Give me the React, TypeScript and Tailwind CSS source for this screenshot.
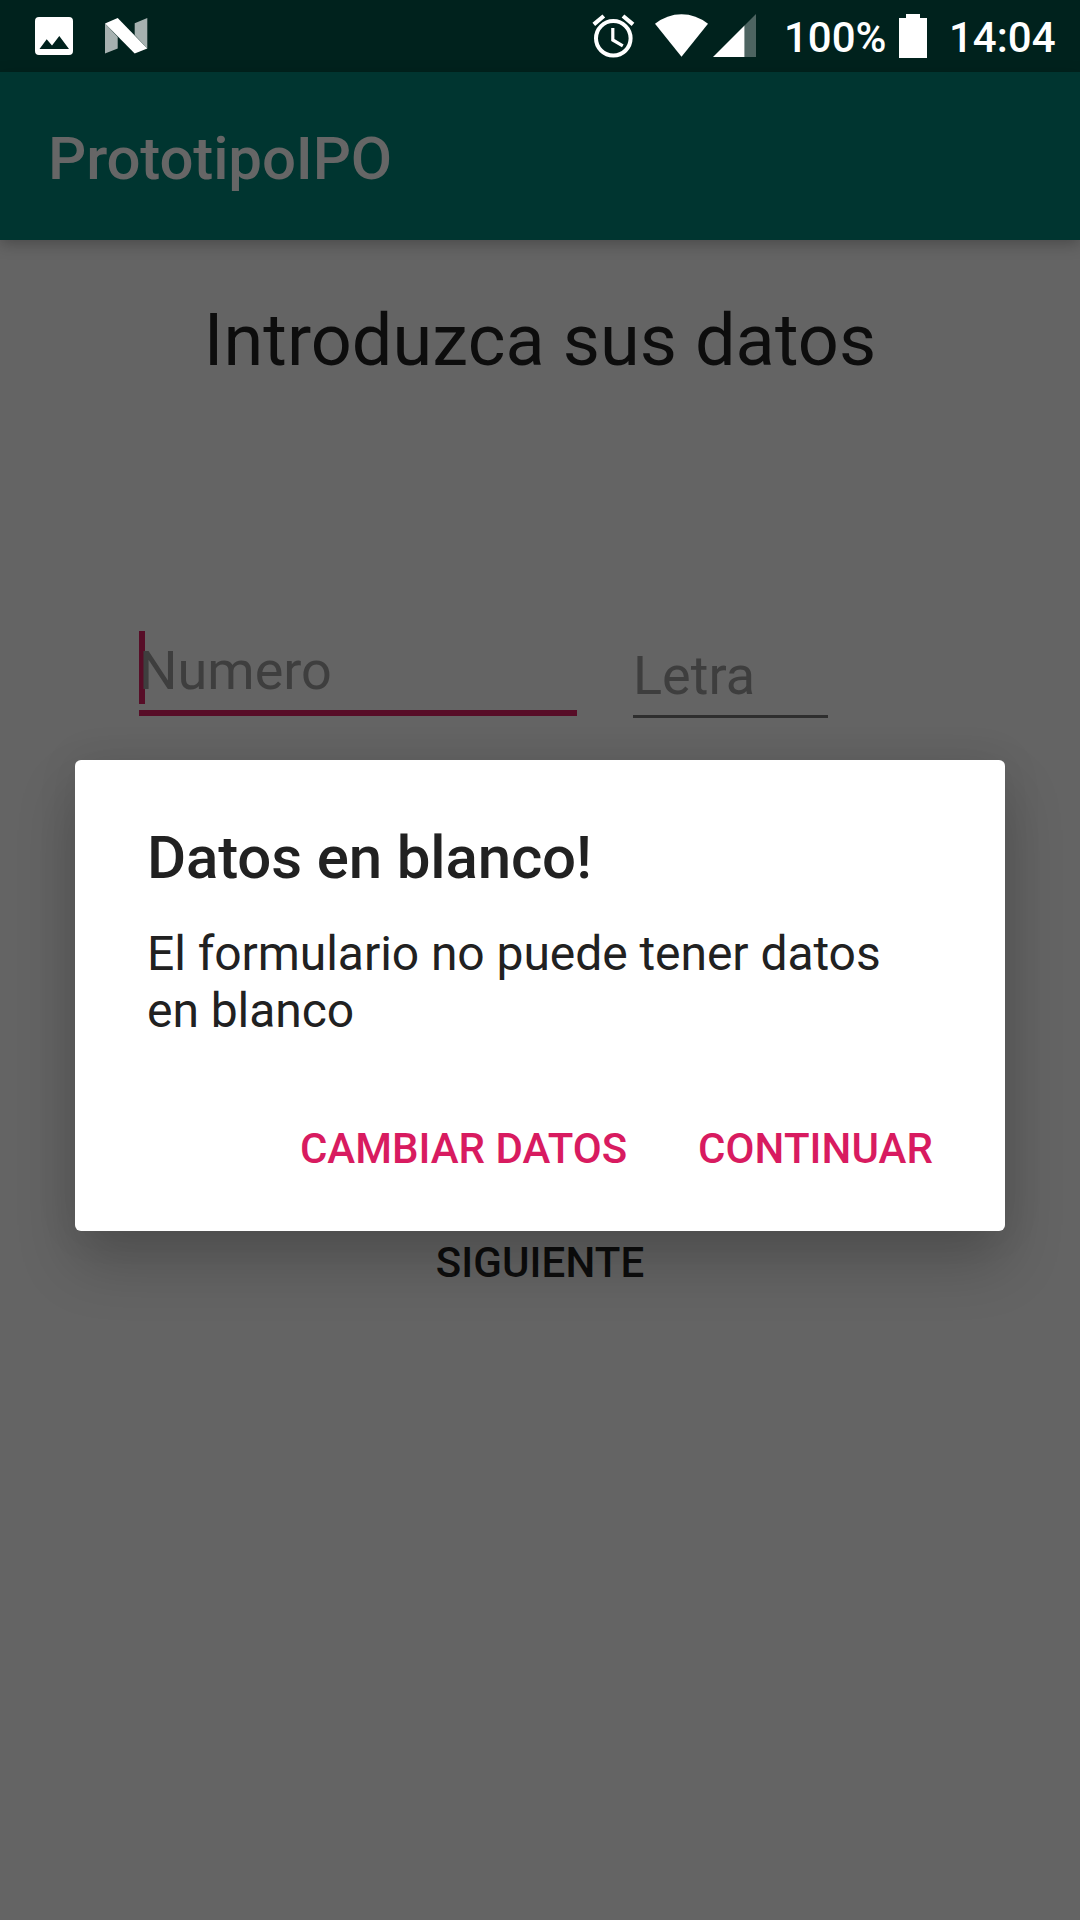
function StatusBar() {
  return (
    <div className="flex h-[72px] items-center bg-[#00221d] pr-6 pl-[35px] text-white">
      <svg width="38" height="38" viewBox="0 0 38 38">
        <path fill="currentColor" fillRule="evenodd" d="M4 0H34Q38 0 38 4V34Q38 38 34 38H4Q0 38 0 34V4Q0 0 4 0ZM4.5 32H34L24.3 19L17 28.5L11.7 22.2Z" />
      </svg>
      <svg width="43" height="36" viewBox="0 0 43 36" className="ml-8">
        <path fill="currentColor" opacity="0.65" d="M0 5.5L12.7 19V30.5L0 35.5ZM42.3 0V30.5L29.7 17V5.3Z" />
        <path fill="currentColor" d="M0 5.5L12.7 0L42.3 30.5L29.7 35.5Z" />
      </svg>
      <svg width="43" height="44" viewBox="0 0 43 44" className="ml-auto" fill="none" stroke="currentColor">
        <circle cx="21.3" cy="24.3" r="17.3" strokeWidth="4" />
        <path strokeWidth="4.2" d="M1.8 10.4L11.8 2M31 2L41 10.4" />
        <path strokeWidth="3.2" d="M20.8 14V26L30.8 31.8" />
      </svg>
      <svg width="53" height="44" viewBox="0 0 53 44" className="ml-[20px]">
        <path fill="currentColor" d="M26.5 42.8L0 9.8Q12 0.2 26.5 0.2T53 9.8Z" />
      </svg>
      <svg width="43" height="44" viewBox="0 0 43 44" className="ml-[5px]">
        <path fill="currentColor" opacity="0.3" d="M31.5 11.5L43 0V43H31.5Z" />
        <path fill="currentColor" d="M0 43L31.5 11.5V43Z" />
      </svg>
      <span className="mt-[3px] ml-[28px] w-[103px] text-[42px] leading-[49px] font-medium whitespace-nowrap">100%</span>
      <svg width="28" height="44" viewBox="0 0 28 44" className="ml-[12px]">
        <path fill="currentColor" d="M7 0H21V4H28V44H0V4H7Z" />
      </svg>
      <span className="mt-[3px] ml-[22px] w-[107px] text-[42px] leading-[49px] font-medium whitespace-nowrap">14:04</span>
    </div>
  );
}

function Form() {
  return (
    <main className="flex flex-col">
      <h1 className="mt-[58px] text-center text-[72px] leading-[85px] tracking-[0.1px] text-[#0d0d0d]">Introduzca sus datos</h1>
      <div className="mt-[248px] flex items-start gap-[56px] pl-[139px] text-[54px] leading-[63px] text-[#3e3e3e]">
        <div className="w-[438px] border-b-6 border-[#570d27]">
          <div className="mb-[6px] h-[73px] border-l-6 border-[#570d27] pt-[8px]">
            <span className="-ml-[6px] block">Numero</span>
          </div>
        </div>
        <div className="h-[87px] w-[195px] border-b-3 border-[#2e2e2e] pt-[13px]">Letra</div>
      </div>
      <div className="mt-[520px] text-center text-[42px] leading-[49px] font-medium tracking-[0.12px] text-[#0d0d0d]">SIGUIENTE</div>
    </main>
  );
}

function Dialog() {
  return (
    <section
      role="dialog"
      className="absolute top-[760px] left-[75px] h-[471px] w-[930px] rounded-[6px] bg-white px-[72px] pt-[62px] text-[#212121] shadow-[0_32px_60px_rgba(0,0,0,0.2),0_0_42px_rgba(0,0,0,0.08)]"
    >
      <h2 className="text-[60px] leading-[71px] font-medium tracking-[-0.15px]">Datos en blanco!</h2>
      <p className="mt-[32px] text-[48px] leading-[57px] tracking-[-0.06px]">El formulario no puede tener datos en blanco</p>
      <div className="mt-[85px] flex justify-end gap-[71px] text-[42px] leading-[49px] font-medium text-[#d81b60]">
        <button>CAMBIAR DATOS</button>
        <button className="tracking-[0.08px]">CONTINUAR</button>
      </div>
    </section>
  );
}

export default function App() {
  return (
    <div className="relative h-[1920px] w-[1080px] overflow-hidden bg-[#646464] font-['Roboto',sans-serif]">
      <StatusBar />
      <header className="h-[168px] bg-[#003530] pt-[51px] pl-12 text-[60px] leading-[71px] font-medium tracking-[-0.15px] text-[#666666] shadow-[0_4px_14px_rgba(0,0,0,0.26)]">
        PrototipoIPO
      </header>
      <Form />
      <Dialog />
    </div>
  );
}
